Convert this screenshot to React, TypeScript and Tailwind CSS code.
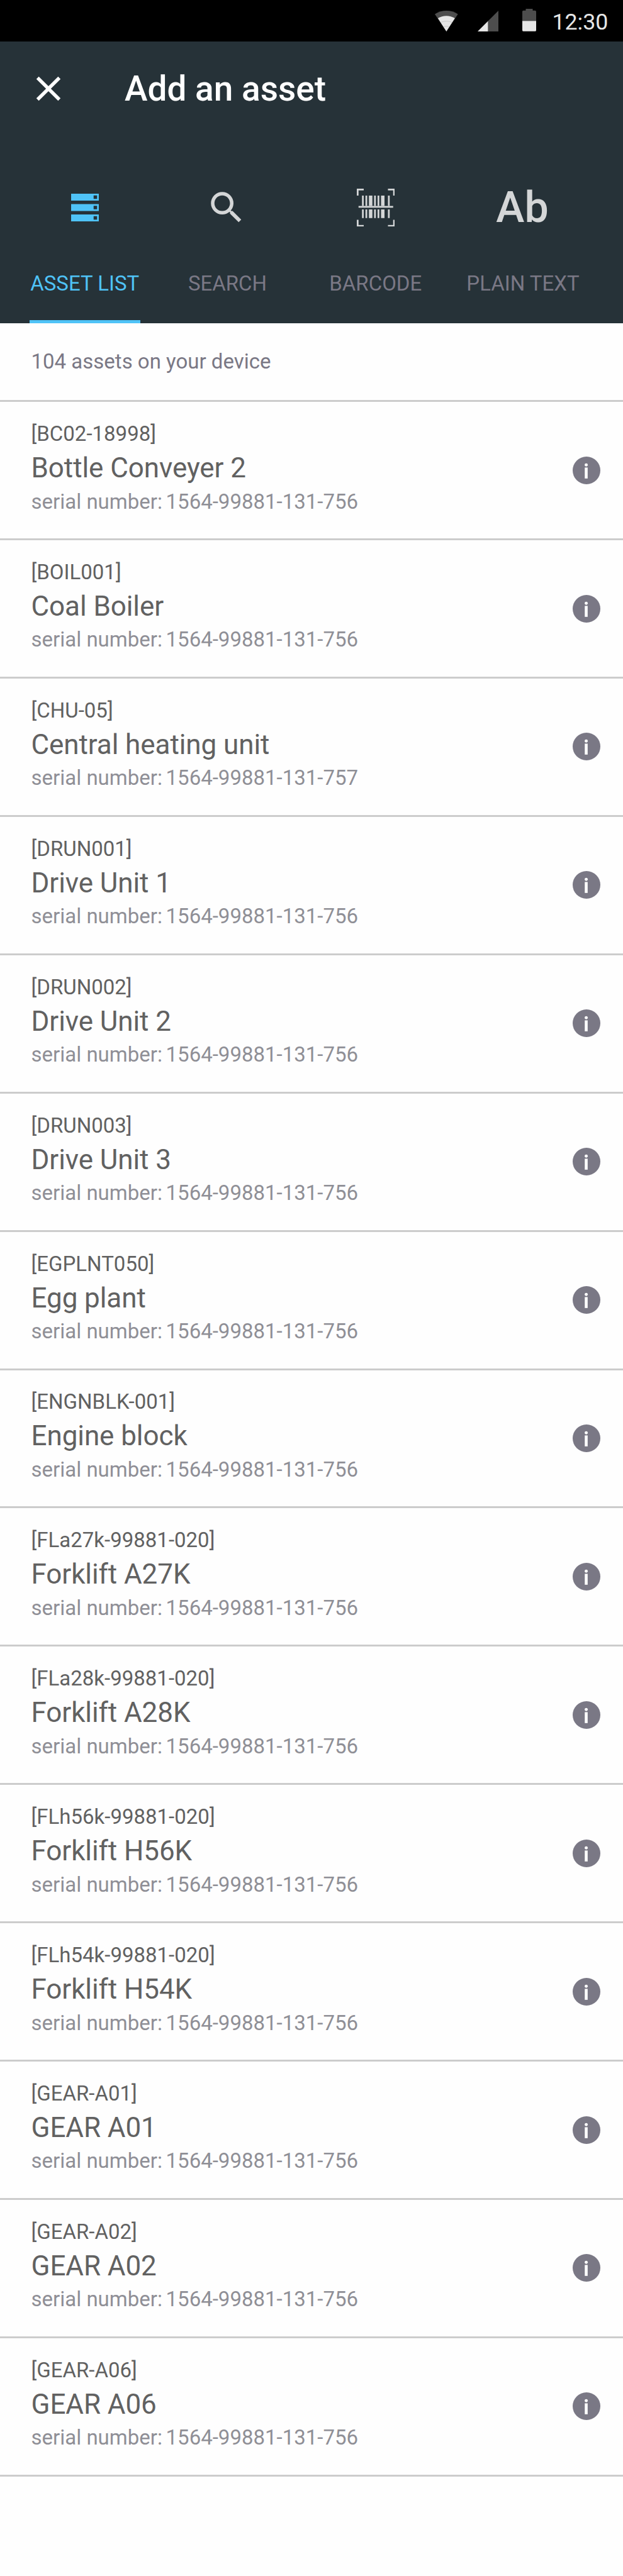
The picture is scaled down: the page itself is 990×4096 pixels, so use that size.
import type { ReactNode } from "react";

type Asset = { code: string; name: string; serial: string };

const assets: Asset[] = [
  { code: "BC02-18998", name: "Bottle Conveyer 2", serial: "1564-99881-131-756" },
  { code: "BOIL001", name: "Coal Boiler", serial: "1564-99881-131-756" },
  { code: "CHU-05", name: "Central heating unit", serial: "1564-99881-131-757" },
  { code: "DRUN001", name: "Drive Unit 1", serial: "1564-99881-131-756" },
  { code: "DRUN002", name: "Drive Unit 2", serial: "1564-99881-131-756" },
  { code: "DRUN003", name: "Drive Unit 3", serial: "1564-99881-131-756" },
  { code: "EGPLNT050", name: "Egg plant", serial: "1564-99881-131-756" },
  { code: "ENGNBLK-001", name: "Engine block", serial: "1564-99881-131-756" },
  { code: "FLa27k-99881-020", name: "Forklift A27K", serial: "1564-99881-131-756" },
  { code: "FLa28k-99881-020", name: "Forklift A28K", serial: "1564-99881-131-756" },
  { code: "FLh56k-99881-020", name: "Forklift H56K", serial: "1564-99881-131-756" },
  { code: "FLh54k-99881-020", name: "Forklift H54K", serial: "1564-99881-131-756" },
  { code: "GEAR-A01", name: "GEAR A01", serial: "1564-99881-131-756" },
  { code: "GEAR-A02", name: "GEAR A02", serial: "1564-99881-131-756" },
  { code: "GEAR-A06", name: "GEAR A06", serial: "1564-99881-131-756" },
];

function WifiIcon() {
  return (
    <svg viewBox="0 0 40 36" className="h-[33px] w-[36.7px]">
      <path d="M0 6C6 2 13 0 20 0s14 2 20 6L20 36z" fill="#4d4d4d" />
      <path d="M5.3 13.2C9.5 10.4 14.7 9 20 9s10.5 1.4 14.7 4.2L20 36z" fill="#e6e6e6" />
      <path d="M10.5 20.3c5.5-2.7 13.5-2.7 19 0M15 28c3-1.2 7-1.2 10 0" fill="none" stroke="#bdbdbd" strokeWidth="0.8" />
    </svg>
  );
}

function SignalIcon() {
  return (
    <svg viewBox="0 0 36 36" className="ml-[31.2px] h-[33px] w-[33px]">
      <path d="M36 0v36H18V18z" fill="#4d4d4d" />
      <path d="M18 18v18H0z" fill="#e6e6e6" />
    </svg>
  );
}

function BatteryIcon() {
  return (
    <svg viewBox="0 0 24 39" className="ml-[38.5px] h-[35.75px] w-[22px]">
      <path d="M6 0h12v3h4a2 2 0 0 1 2 2v16H0V5a2 2 0 0 1 2-2h4z" fill="#4d4d4d" />
      <path d="M0 21h24v16a2 2 0 0 1-2 2H2a2 2 0 0 1-2-2z" fill="#e6e6e6" />
    </svg>
  );
}

function CloseIcon() {
  return (
    <svg viewBox="0 0 24 24" className="h-[66px] w-[66px]" fill="#fff">
      <path d="M19 6.41 17.59 5 12 10.59 6.41 5 5 6.41 10.59 12 5 17.59 6.41 19 12 13.41 17.59 19 19 17.59 13.41 12z" />
    </svg>
  );
}

function ListIcon() {
  return (
    <svg viewBox="0 0 48 48" className="size-11" fill="#4fc3f7" fillRule="evenodd">
      <path d="M0 0h48v12H0zM39 3v6h6V3z" />
      <path d="M0 18h48v12H0zM39 21v6h6v-6z" />
      <path d="M0 36h48v12H0zM39 39v6h6v-6z" />
    </svg>
  );
}

function SearchIcon() {
  return (
    <svg viewBox="0 0 24 24" className="mr-[3px] h-[66px] w-[66px]" fill="#d4d6d7">
      <path d="M15.5 14h-.79l-.28-.27A6.471 6.471 0 0 0 16 9.5 6.5 6.5 0 1 0 9.5 16c1.61 0 3.09-.59 4.23-1.57l.27.28v.79l5 4.99L20.49 19l-4.99-5zm-6 0C7.01 14 5 11.99 5 9.5S7.01 5 9.5 5 14 7.01 14 9.5 11.99 14 9.5 14z" />
    </svg>
  );
}

function BarcodeIcon() {
  return (
    <svg viewBox="0 0 66 66" className="h-[60.5px] w-[60.5px]" fill="#d4d6d7">
      <path d="M0 0h12v3H3v9H0zM54 0h12v12h-3V3h-9zM0 54h3v9h9v3H0zM63 54h3v12H54v-3h9z" />
      <path d="M9 12h3v18H9zM15 12h3v18h-3zM21 12h6v18h-6zM30 12h3v18h-3zM36 12h3v18h-3zM42 12h6v18h-6zM54 12h3v18h-3z" />
      <path d="M3 30h60v3H3z" />
      <path d="M9 36h3v15H9zM15 36h3v15h-3zM21 36h6v15h-6zM30 36h3v15h-3zM36 36h3v15h-3zM42 36h6v15h-6zM54 36h3v15h-3z" />
    </svg>
  );
}

function InfoIcon() {
  return (
    <svg viewBox="0 0 48 48" className="size-11">
      <circle cx="24" cy="24" r="24" fill="#7a7885" />
      <circle cx="23.5" cy="14.5" r="2.7" fill="#fff" />
      <path d="M21 19h5v19h-5z" fill="#fff" />
    </svg>
  );
}

function Tab({ icon, label, width, active }: { icon: ReactNode; label: string; width: string; active?: boolean }) {
  return (
    <button
      className={`flex h-full flex-col items-center border-b-[5.5px] pt-[82px] ${width} ${
        active ? "border-[#4fc3f7] text-[#4fc3f7]" : "border-transparent text-[#7a7885]"
      }`}
    >
      <span className="flex h-[66px] items-center justify-center">{icon}</span>
      <span className="mt-[65.7px] text-[33px] leading-[44px] whitespace-nowrap">{label}</span>
    </button>
  );
}

function AssetRow({ code, name, serial }: Asset) {
  return (
    <li className="flex h-[219.92px] items-center justify-between border-b-3 border-[#cccccc] pr-[35.75px] pl-[49.5px]">
      <div className="flex h-full flex-col pt-[28.9px]">
        <span className="text-[33px] leading-[44px] text-[#616161]">[{code}]</span>
        <span className="text-[44px] leading-[64.5px] tracking-[-0.08px] text-[#616161]">{name}</span>
        <span className="text-[33px] leading-[42px] text-[#8f8f96]">
          serial number: <span className="ml-[-2.6px]">{serial}</span>
        </span>
      </div>
      <InfoIcon />
    </li>
  );
}

export default function App() {
  return (
    <div className="h-[4096px] w-[990px] overflow-hidden bg-[#fefefe] font-[Roboto,sans-serif]">
      <div className="flex h-[66px] items-end justify-end bg-black pr-[23.6px]">
        <div className="flex items-end pb-[16.5px]">
          <WifiIcon />
          <SignalIcon />
          <BatteryIcon />
        </div>
        <span className="ml-[25px] pb-[10px] text-[35.75px] leading-[42px] text-[#e6e6e6]">12:30</span>
      </div>

      <header className="h-[448px] bg-[#263238]">
        <div className="flex h-[149px] items-center pl-[44px]">
          <CloseIcon />
          <h1 className="ml-[88px] text-[55px] leading-[66px] font-medium text-white">Add an asset</h1>
        </div>
        <nav className="flex h-[299px] pl-[46.75px]">
          <Tab icon={<ListIcon />} label="ASSET LIST" width="w-[176px]" active />
          <Tab icon={<SearchIcon />} label="SEARCH" width="w-[277.5px]" />
          <Tab icon={<BarcodeIcon />} label="BARCODE" width="w-[193px]" />
          <Tab
            icon={<span className="pr-[2px] text-[68px] leading-[66px] font-medium text-[#d4d6d7]">Ab</span>}
            label="PLAIN TEXT"
            width="w-[275.5px]"
          />
        </nav>
      </header>

      <main>
        <div className="flex h-[125.2px] items-center border-b-3 border-[#cccccc] pb-px pl-[49.5px] text-[33px] leading-[44px] text-[#7a7885]">
          104 assets on your device
        </div>
        <ul>
          {assets.map((asset) => (
            <AssetRow key={asset.code} {...asset} />
          ))}
        </ul>
      </main>
    </div>
  );
}
